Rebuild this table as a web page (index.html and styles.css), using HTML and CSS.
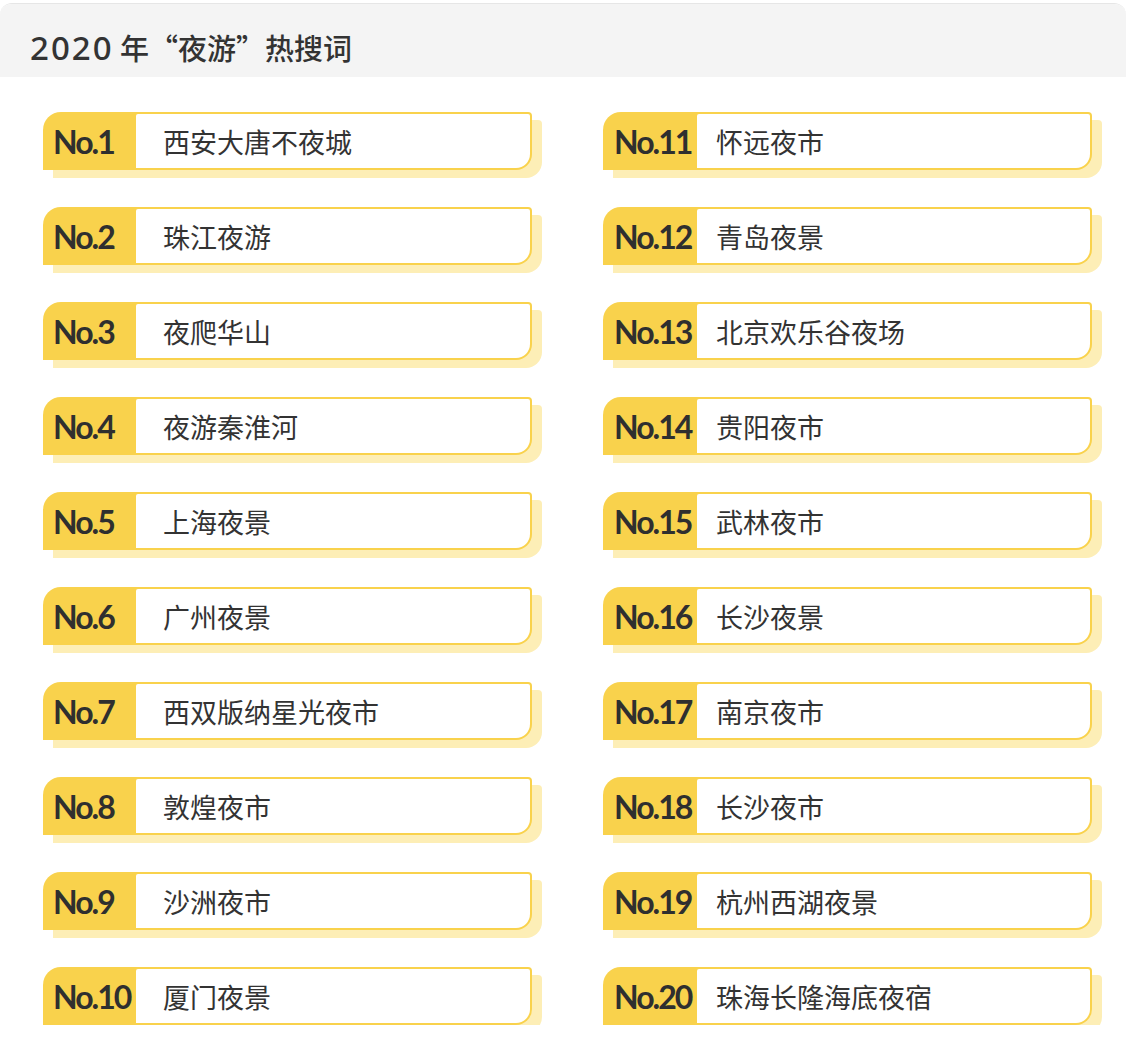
FILE: index.html
```html
<!DOCTYPE html>
<html lang="zh-CN">
<head>
<meta charset="utf-8">
<title>2020 年“夜游”热搜词</title>
<link rel="stylesheet" href="styles.css">
</head>
<body>
<div class="panel">
  <div class="panel-head">
    <h1 class="title"><span class="year">2020</span> 年“夜游”热搜词</h1>
  </div>
  <div class="list">
    <div class="col col-left">
      <div class="item"><div class="no">No.1</div><div class="name">西安大唐不夜城</div></div>
      <div class="item"><div class="no">No.2</div><div class="name">珠江夜游</div></div>
      <div class="item"><div class="no">No.3</div><div class="name">夜爬华山</div></div>
      <div class="item"><div class="no">No.4</div><div class="name">夜游秦淮河</div></div>
      <div class="item"><div class="no">No.5</div><div class="name">上海夜景</div></div>
      <div class="item"><div class="no">No.6</div><div class="name">广州夜景</div></div>
      <div class="item"><div class="no">No.7</div><div class="name">西双版纳星光夜市</div></div>
      <div class="item"><div class="no">No.8</div><div class="name">敦煌夜市</div></div>
      <div class="item"><div class="no">No.9</div><div class="name">沙洲夜市</div></div>
      <div class="item"><div class="no">No.10</div><div class="name">厦门夜景</div></div>
    </div>
    <div class="col col-right">
      <div class="item"><div class="no">No.11</div><div class="name">怀远夜市</div></div>
      <div class="item"><div class="no">No.12</div><div class="name">青岛夜景</div></div>
      <div class="item"><div class="no">No.13</div><div class="name">北京欢乐谷夜场</div></div>
      <div class="item"><div class="no">No.14</div><div class="name">贵阳夜市</div></div>
      <div class="item"><div class="no">No.15</div><div class="name">武林夜市</div></div>
      <div class="item"><div class="no">No.16</div><div class="name">长沙夜景</div></div>
      <div class="item"><div class="no">No.17</div><div class="name">南京夜市</div></div>
      <div class="item"><div class="no">No.18</div><div class="name">长沙夜市</div></div>
      <div class="item"><div class="no">No.19</div><div class="name">杭州西湖夜景</div></div>
      <div class="item"><div class="no">No.20</div><div class="name">珠海长隆海底夜宿</div></div>
    </div>
  </div>
</div>
</body>
</html>
```
FILE: styles.css
```css
html, body {
  margin: 0;
  padding: 0;
  background: #ffffff;
}
body {
  font-family: "Noto Sans CJK SC", "Noto Sans", sans-serif;
  color: #333333;
  width: 1128px;
  height: 1064px;
  overflow: hidden;
}
.panel {
  margin-top: 3px;
  width: 1126px;
  border-top: 1px solid #e6e6e6;
  border-radius: 12px 12px 0 0;
  overflow: hidden;
}
.panel-head {
  background: #f4f4f4;
  height: 73px;
  box-sizing: border-box;
  display: flex;
  align-items: center;
  padding: 14px 0 0 30px;
}
.title {
  margin: 0;
  font-size: 29px;
  font-weight: 500;
  color: #333333;
  line-height: 1;
}
.year {
  font-family: "Noto Sans", sans-serif;
  font-size: 33px;
  font-weight: 500;
  letter-spacing: 2px;
}
.list {
  display: flex;
  gap: 71px;
  padding: 35px 0 0 43px;
}
.col {
  width: 489px;
  display: flex;
  flex-direction: column;
  gap: 37px;
}
.item {
  height: 58px;
  box-sizing: border-box;
  display: flex;
  background: #f9d24c;
  border-radius: 18px 4px 16px 0;
  padding: 2px 2px 2px 0;
  box-shadow: 10px 8px 0 #fdeeb6;
}
.no {
  width: 93px;
  flex: none;
  display: flex;
  align-items: center;
  padding-left: 10px;
  box-sizing: border-box;
  font-family: "Lato", sans-serif;
  font-weight: 700;
  font-size: 32px;
  letter-spacing: -2px;
  color: #2f2f2f;
}
.name {
  flex: 1;
  background: #ffffff;
  border-radius: 2px 2px 14px 0;
  display: flex;
  align-items: center;
  padding-left: 27px;
  font-size: 27px;
  color: #333333;
}
.col-right .no {
  width: 94px;
  padding-left: 11px;
}
.col-right .name {
  padding-left: 19px;
}
```
